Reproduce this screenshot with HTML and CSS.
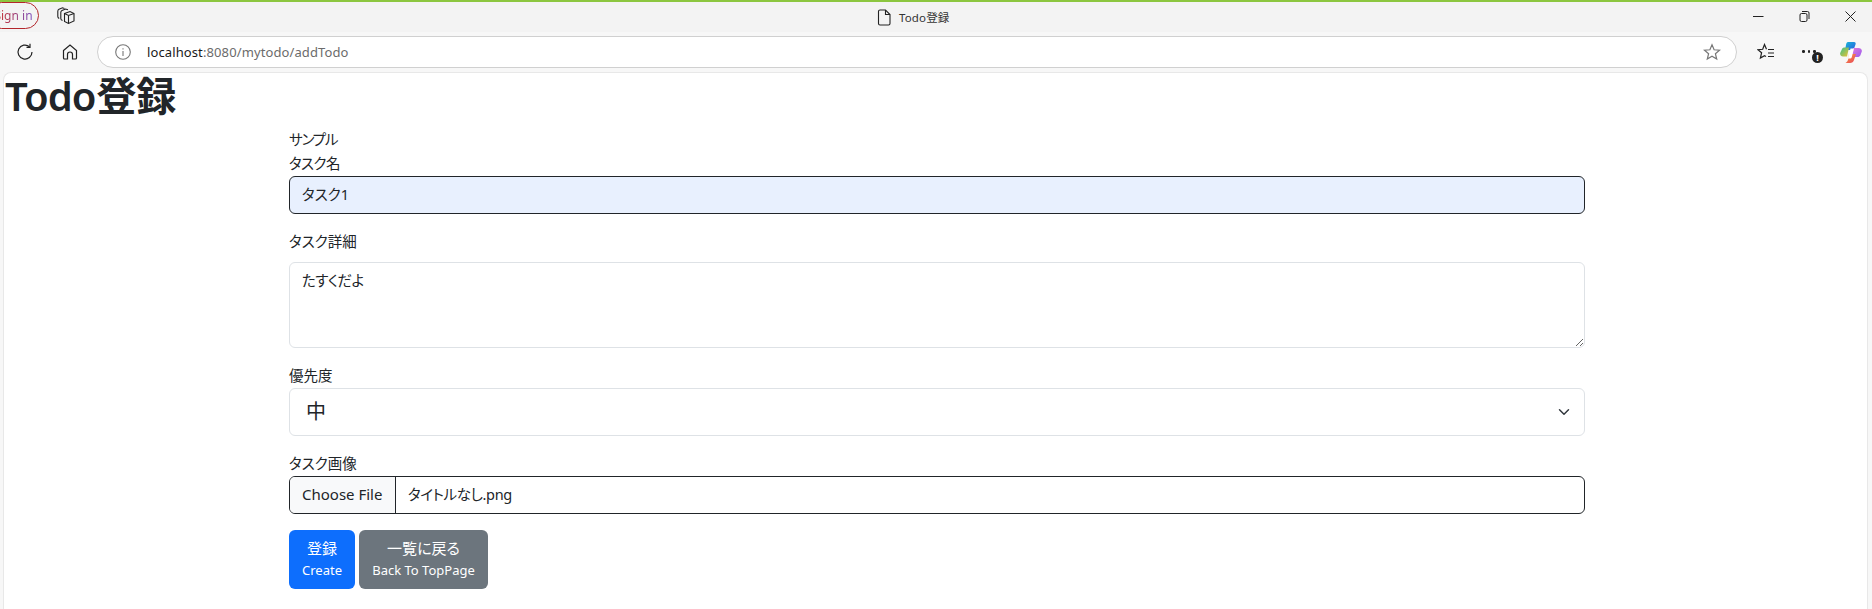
FILE: index.html
```html
<!DOCTYPE html>
<html lang="ja">
<head>
<meta charset="utf-8">
<title>Todo登録</title>
<link rel="stylesheet" href="styles.css">
</head>
<body>
<div class="titlebar">
  <div class="title-left">
    <div class="signin"><span class="signin-text">Sign in</span></div>
    <svg class="ic-tabs" width="18" height="18" viewBox="0 0 18 18" fill="none" stroke="#222" stroke-width="1.1"><path d="M7.500 6.500 13 4.500 17 6.500V14L11.500 16.500 7.500 14.500Z"/><path d="M7.500 6.500 11.500 8.500 17 6.500M11.500 8.500V16.500"/><path d="M11 2.800 8.500 2 5 3.500C4 4 3.800 4.500 3.800 5.500V11.500C3.800 12.500 4.200 13 5.500 13.600"/><path d="M7.500 1.500 5.500.8 2 2.200C1 2.700.8 3.200.8 4.200V9.500C.8 10.500 1.200 11 2.200 11.500"/></svg>
  </div>
  <div class="title-center">
    <svg width="14" height="17" viewBox="0 0 14 17" fill="none" stroke="#222" stroke-width="1.1"><path d="M3 1h5.500L13 5.500V14.500a1.500 1.500 0 0 1-1.500 1.500h-8.500A1.500 1.500 0 0 1 1.500 14.500V2.500A1.500 1.500 0 0 1 3 1Z"/><path d="M8.500 1V5.500H13"/></svg>
    <span class="tab-title">Todo登録</span>
  </div>
  <div class="winbtns">
    <svg width="11" height="11" viewBox="0 0 11 11" stroke="#222" fill="none"><path d="M0 5.500H10.500"/></svg>
    <svg width="11" height="11" viewBox="0 0 11 11" stroke="#222" fill="none"><rect x="1" y="2.500" width="7" height="8" rx="1.500"/><path d="M3 .500H8.500A1.500 1.500 0 0 1 10 2V8"/></svg>
    <svg width="11" height="11" viewBox="0 0 11 11" stroke="#222" fill="none"><path d="M.5 .5 10.500 10.500M10.500 .5 .5 10.500"/></svg>
  </div>
</div>
<div class="toolbar">
  <svg class="ic-reload" width="18" height="18" viewBox="0 0 18 18" fill="none" stroke="#222" stroke-width="1.2"><path d="M16 9A7 7 0 1 1 13.500 3.700"/><path d="M14 .8V4.300H10.500"/></svg>
  <svg class="ic-home" width="18" height="18" viewBox="0 0 18 18" fill="none" stroke="#222" stroke-width="1.2"><path d="M2.500 7.500 9 2l6.500 5.500V15a1 1 0 0 1-1 1H11.500V11.500a2.500 2.500 0 0 0-5 0V16H3.500a1 1 0 0 1-1-1Z"/></svg>
  <div class="addressbar">
    <svg class="ic-info" width="16" height="16" viewBox="0 0 16 16" fill="none" stroke="#777" stroke-width="1.1"><circle cx="8" cy="8" r="7.300"/><path d="M8 7V12M8 4.200V5.400"/></svg>
    <span class="url"><span class="url-host">localhost</span>:8080/mytodo/addTodo</span>
    <svg class="ic-star" width="18" height="18" viewBox="0 0 18 18" fill="none" stroke="#777" stroke-width="1.2"><path d="M9 1.800 11.100 6.800 16.500 7.200 12.400 10.700 13.700 16 9 13.200 4.300 16 5.600 10.700 1.500 7.200 6.900 6.800Z"/></svg>
  </div>
  <svg class="ic-favs" width="18" height="18" viewBox="0 0 18 18" fill="none" stroke="#222" stroke-width="1.2"><path d="M9.500 6.300 7.500 1.500 5.700 6.300 1 6.700 4.600 9.700 3.400 15 7.500 12.700 9 13.500"/><path d="M11 6.500H17M11 10H17M11 13.500H17"/></svg>
  <div class="more">
    <span class="dot"></span><span class="dot"></span><span class="dot"></span>
    <span class="alert">!</span>
  </div>
  <svg class="ic-copilot" width="22" height="21" viewBox="0 0 22 21">
    <defs>
      <linearGradient id="cpa" x1="0" y1="0" x2="1" y2="1"><stop offset="0" stop-color="#18b6d8"/><stop offset="1" stop-color="#2a5fe0"/></linearGradient>
      <linearGradient id="cpb" x1="0" y1="0" x2="1" y2="1"><stop offset="0" stop-color="#38c08a"/><stop offset="1" stop-color="#f0c030"/></linearGradient>
      <linearGradient id="cpc" x1="0" y1="0" x2="1" y2="1"><stop offset="0" stop-color="#e078d8"/><stop offset="1" stop-color="#9a5cf0"/></linearGradient>
      <linearGradient id="cpd" x1="0" y1="0" x2="1" y2="1"><stop offset="0" stop-color="#f8a040"/><stop offset="1" stop-color="#e8405c"/></linearGradient>
    </defs>
    <path d="M8 0H14C15.500 0 16 1 15.500 2.500L13.500 8H5L6 3C6.300 1 7 0 8 0Z" fill="url(#cpa)"/>
    <path d="M4.500 5.500H9L7 14.500H3C1 14.500-.3 13 .2 11L2 7C2.500 6 3.300 5.500 4.500 5.500Z" fill="url(#cpb)"/>
    <path d="M13 6H18.500C20.500 6 22.300 7.500 21.800 9.500L20.500 13C20 14.500 18.800 15 17.500 15H12Z" fill="url(#cpc)"/>
    <path d="M9 12H16L14 18C13.500 20 12 21 10 21H5.500C7.500 20 8 18 8.500 16Z" fill="url(#cpd)"/>
    <path d="M10.500 6.500H14L11.800 15C11.500 16 11 16.500 9.500 16.500H8Z" fill="#fff"/>
  </svg>
</div>
<main class="page">
  <h1 class="heading"><span class="heading-latin">Todo</span>登録</h1>
  <form class="todo-form">
    <div class="plain-line tight-more">サンプル</div>
    <div class="plain-line tight">タスク名</div>
    <input class="control control-auto" type="text" value="タスク1">
    <label class="field-label field-gap">タスク詳細</label>
    <textarea class="control control-area">たすくだよ</textarea>
    <div class="plain-line field-top">優先度</div>
    <select class="control control-select"><option>中</option></select>
    <div class="plain-line field-top">タスク画像</div>
    <div class="control control-file">
      <span class="file-btn">Choose File</span>
      <span class="file-name">タイトルなし.png</span>
    </div>
    <div class="actions">
      <button type="button" class="btn btn-primary"><span class="btn-main">登録</span><small class="btn-sub">Create</small></button>
      <button type="button" class="btn btn-secondary"><span class="btn-main">一覧に戻る</span><small class="btn-sub">Back To TopPage</small></button>
    </div>
  </form>
</main>
</body>
</html>
```

FILE: styles.css
```css
* { box-sizing: border-box; }
html, body { margin: 0; height: 609px; overflow: hidden; }
body {
  font-family: "Noto Sans", "Noto Sans CJK JP", sans-serif;
  font-size: 16px;
  color: #212529;
  background: #f7f7f7;
  border-top: 2px solid #8cc63f;
  display: flex;
  flex-direction: column;
  font-feature-settings: "palt";
}
.titlebar {
  height: 30px;
  background: #f3f3f3;
  display: flex;
  align-items: center;
  flex: none;
}
.title-left { display: flex; align-items: center; width: 877px; height: 100%; }
.signin {
  width: 51px;
  height: 27px;
  margin-left: -12px;
  margin-top: -3px;
  flex: none;
  border: 1px solid #b3262b;
  border-radius: 14px;
  display: flex;
  align-items: center;
  justify-content: center;
  font-size: 12px;
}
.signin-text {
  background: linear-gradient(90deg, #d0301f, #7a4fc0);
  -webkit-background-clip: text;
  background-clip: text;
  color: transparent;
}
.ic-tabs { margin-left: 18px; margin-top: -2px; }
.title-center { display: flex; align-items: center; gap: 8px; width: 771px; }
.tab-title { font-size: 11.500px; color: #333; letter-spacing: .15px; }
.winbtns { display: flex; gap: 35px; margin-left: 105px; margin-top: -1px; }
.toolbar {
  height: 40px;
  flex: none;
  display: flex;
  align-items: center;
  padding-left: 16px;
}
.ic-home { margin-left: 27px; }
.addressbar {
  width: 1640px;
  height: 32px;
  margin-left: 18px;
  background: #fff;
  border: 1px solid #d0d0d0;
  border-radius: 16px;
  display: flex;
  align-items: center;
  padding-left: 17px;
  padding-right: 15px;
}
.url { margin-left: 16px; font-size: 13px; letter-spacing: .11px; color: #6b6b6b; flex: 1; font-feature-settings: normal; }
.url-host { color: #1a1a1a; }
.ic-favs { margin-left: 20px; }
.more { position: relative; width: 24px; height: 24px; margin-left: 27px; display: flex; gap: 3px; padding-top: 10px; }
.dot { width: 2.500px; height: 2.500px; background: #222; border-radius: 50%; }
.alert {
  position: absolute;
  left: 10px;
  top: 12px;
  width: 11px;
  height: 11px;
  border-radius: 50%;
  background: #222;
  color: #fff;
  font-size: 9px;
  font-weight: 700;
  line-height: 11px;
  text-align: center;
}
.ic-copilot { margin-left: 14px; }
.page {
  flex: 1;
  margin: 0 4px 0 3px;
  background: #fff;
  border-top: 1px solid #e8e8e8;
  border-left: 1px solid #e8e8e8;
  border-right: 1px solid #e8e8e8;
  border-radius: 8px 8px 0 0;
}
.heading {
  margin: -1px 0 8px 1px;
  font-size: 40px;
  line-height: 48px;
  font-weight: 600;
}
.heading-latin { letter-spacing: -1px; margin-right: 1px; }
.todo-form { width: 1296px; margin-left: 285px; }
.plain-line { height: 24px; line-height: 22px; font-size: 14.500px; }
.tight-more { letter-spacing: -1.2px; }
.tight { letter-spacing: -.6px; }
.field-top { margin-top: 16px; }
.field-label { display: block; height: 24px; line-height: 22px; margin-bottom: 8px; font-size: 14.500px; }
.field-gap { margin-top: 16px; }
.control {
  display: block;
  width: 100%;
  border: 1px solid #dee2e6;
  border-radius: 6px;
  font: inherit;
  font-feature-settings: "palt";
  color: #212529;
  background: #fff;
  outline: none;
}
.control-auto {
  height: 38px;
  padding: 4px 12px 8px;
  background: #e8f0fe;
  border-color: #212529;
  font-size: 14.500px;
}
.control-area { height: 86px; padding: 5px 12px 6px; font-size: 14.500px; line-height: 24px; letter-spacing: -.5px; resize: vertical; }
.control-select {
  height: 48px;
  padding: 8px 36px 8px 16px;
  font-size: 20px;
  line-height: 30px;
  appearance: none;
  background-image: url("data:image/svg+xml,%3csvg xmlns='http://www.w3.org/2000/svg' viewBox='0 0 16 16'%3e%3cpath fill='none' stroke='%23343a40' stroke-linecap='round' stroke-linejoin='round' stroke-width='2' d='m2 5 6 6 6-6'/%3e%3c/svg%3e");
  background-repeat: no-repeat;
  background-position: right 12px center;
  background-size: 16px 12px;
}
.control-file {
  height: 38px;
  border-color: #212529;
  display: flex;
  overflow: hidden;
  font-size: 14.500px;
}
.file-btn {
  width: 106px;
  background: #f8f9fa;
  border-right: 1px solid #212529;
  padding: 0 12px;
  font-size: 15px;
  line-height: 34px;
  white-space: nowrap;
}
.file-name { padding: 0 12px; line-height: 34px; letter-spacing: -.35px; }
.actions { margin-top: 16px; display: flex; gap: 4px; }
.btn {
  border: 1px solid transparent;
  border-radius: 6px;
  color: #fff;
  padding: 5px 0 7px;
  font: inherit;
  font-feature-settings: "palt";
  display: flex;
  flex-direction: column;
  align-items: center;
  height: 59px;
}
.btn-primary { background: #0d6efd; width: 66px; }
.btn-secondary { background: #6c757d; width: 129px; }
.btn-main { font-size: 15px; line-height: 24px; white-space: nowrap; }
.btn-sub { font-size: 13px; line-height: 21px; white-space: nowrap; }
```
